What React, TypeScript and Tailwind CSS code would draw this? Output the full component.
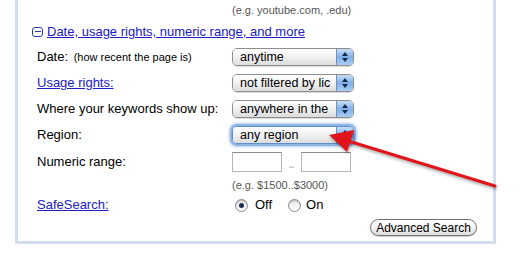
import { type FC, type ReactNode } from 'react'

const font = { fontFamily: '"Liberation Sans", Arial, sans-serif' }

const Select: FC<{ value: string; focused?: boolean }> = ({ value, focused }) => {
  return (
    <div
      className={`flex h-[18px] w-[122px] overflow-hidden rounded-[5px] border ${
        focused
          ? 'border-[#5b8fd0] shadow-[0_0_0_2px_#8db4e3,0_0_3px_3px_#b4cdee]'
          : 'border-[#8e8e8e] shadow-[0_1px_1px_rgba(0,0,0,0.15)]'
      }`}
    >
      <div className="flex flex-1 items-center overflow-hidden whitespace-nowrap bg-gradient-to-b from-white via-[#f1f1f1] to-[#dcdcdc] pl-[7px] text-[12.5px] text-black">
        {value}
      </div>
      <div className="flex w-[17px] flex-col items-center justify-center gap-[2px] border-l border-[#7a8fb0] bg-gradient-to-b from-[#c9def7] via-[#7fb0ec] to-[#a9cdf6]">
        <div className="h-0 w-0 border-x-[3px] border-b-[4px] border-x-transparent border-b-[#1b2a44]" />
        <div className="h-0 w-0 border-x-[3px] border-t-[4px] border-x-transparent border-t-[#1b2a44]" />
      </div>
    </div>
  )
}

const Row: FC<{ label: ReactNode; children: ReactNode; h?: string }> = ({ label, children, h = 'h-[26px]' }) => {
  return (
    <div className={`flex items-center ${h}`}>
      <div className="w-[195px] text-[13px] text-black">{label}</div>
      <div className="flex items-center">{children}</div>
    </div>
  )
}

const Radio: FC<{ checked?: boolean }> = ({ checked }) => {
  return (
    <div className="flex h-[13px] w-[13px] items-center justify-center rounded-full border border-[#8a8a8a] bg-gradient-to-b from-[#e4e4e4] to-white shadow-[inset_0_1px_1px_rgba(0,0,0,0.2)]">
      {checked && <div className="h-[5px] w-[5px] rounded-full bg-[#1d2f4d]" />}
    </div>
  )
}

const App: FC = () => {
  return (
    <div className="relative h-[256px] w-[526px] overflow-hidden bg-white" style={font}>
      <div className="ml-[15px] h-[244px] w-[481px] border-x-[3px] border-b-[3px] border-[#d3dbee] pl-[19px]">
        {/* site hint */}
        <div className="flex h-[20px] items-center pl-[195px] text-[11px] text-[#555]">
          (e.g. youtube.com, .edu)
        </div>

        {/* toggle link */}
        <div className="flex h-[22px] items-center pt-[1px]">
          <div className="mr-[4px] -ml-[5px] flex h-[10px] w-[11px] items-center justify-center rounded-[3px] border border-[#2b3ca8] bg-white">
            <div className="h-[1.5px] w-[6px] bg-[#2b3ca8]" />
          </div>
          <a className="text-[13px] text-[#2020c4] underline">Date, usage rights, numeric range, and more</a>
        </div>

        <div className="h-[2px]" />

        <Row
          label={
            <span>
              Date: <span className="ml-[2px] text-[11px]">(how recent the page is)</span>
            </span>
          }
        >
          <Select value="anytime" />
        </Row>
        <Row label={<a className="text-[#2020c4] underline">Usage rights:</a>}>
          <Select value="not filtered by lic" />
        </Row>
        <Row label="Where your keywords show up:">
          <Select value="anywhere in the" />
        </Row>
        <Row label="Region:">
          <Select value="any region" focused />
        </Row>
        <Row label="Numeric range:" h="h-[27px]">
          <div className="h-[20px] w-[50px] border border-[#b5b5b5] border-t-[#8c8c8c] bg-white" />
          <div className="mx-[7px] mt-[8px] text-[9px] font-bold leading-none text-[#9a9a9a]">..</div>
          <div className="h-[20px] w-[50px] border border-[#b5b5b5] border-t-[#8c8c8c] bg-white" />
        </Row>
        <div className="flex h-[20px] items-center pl-[195px] text-[11px] text-[#555]">(e.g. $1500..$3000)</div>
        <Row label={<a className="text-[#2020c4] underline">SafeSearch:</a>} h="h-[20px]">
          <div className="ml-[3px] flex items-center gap-[7px] text-[13px]">
            <Radio checked />
            <span>Off</span>
          </div>
          <div className="ml-[16px] flex items-center gap-[5px] text-[13px]">
            <Radio />
            <span>On</span>
          </div>
        </Row>

        <div className="mt-[4px] flex justify-end pr-[16px]">
          <button className="h-[17px] w-[107px] rounded-full border border-[#6f6f6f] bg-gradient-to-b from-white via-[#f4f4f4] to-[#dedede] text-[12px] leading-none text-black shadow-[0_1px_1px_rgba(0,0,0,0.2)]">
            Advanced Search
          </button>
        </div>
      </div>

      {/* red callout arrow */}
      <svg className="pointer-events-none absolute left-0 top-0" width="526" height="256" viewBox="0 0 526 256">
        <g style={{ filter: 'drop-shadow(1px 2px 1.5px rgba(0,0,0,0.35))' }}>
          <line x1="495" y1="186" x2="345" y2="140" stroke="#e2141b" strokeWidth="3" strokeLinecap="round" />
          <polygon points="329,135 354,130 347,152" fill="#e2141b" />
        </g>
      </svg>
    </div>
  )
}

export default App
